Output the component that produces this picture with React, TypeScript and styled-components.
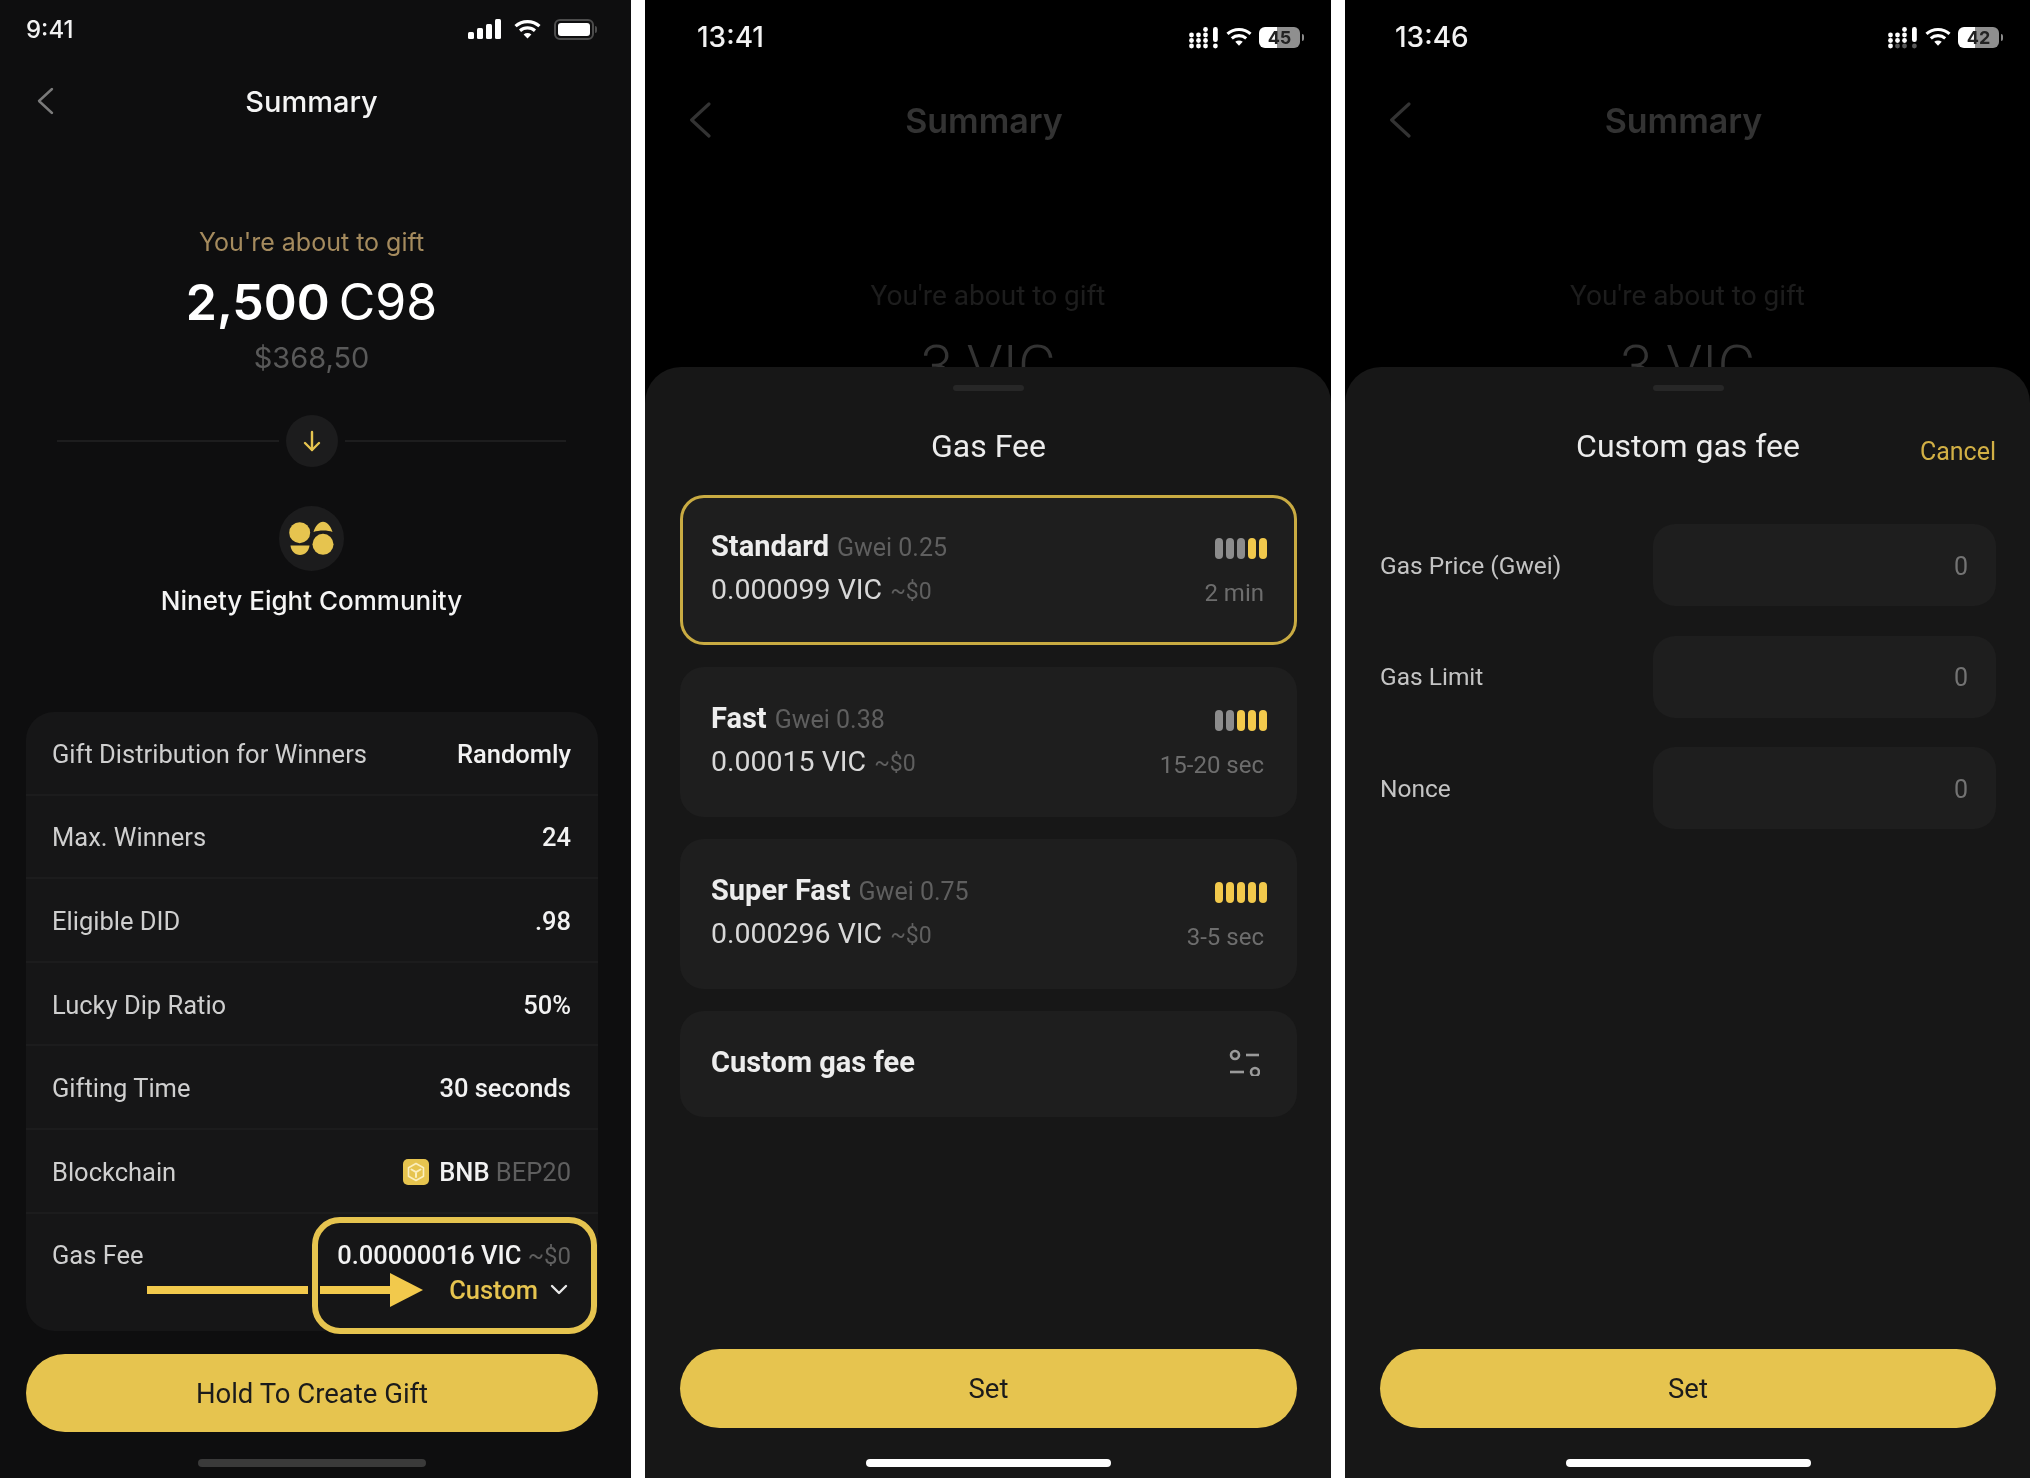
import React from 'react';
import styled, { createGlobalStyle } from 'styled-components';

const gold = '#e6c44f';
const bright = '#f2c94c';
const fontStack = `'Roboto', 'Liberation Sans', sans-serif`;

const GlobalStyle = createGlobalStyle`
  html, body {
    margin: 0;
    padding: 0;
    background: #ffffff;
  }
  * {
    box-sizing: border-box;
  }
`;

const Page = styled.div`
  display: flex;
  gap: 14px;
  width: 2030px;
  height: 1478px;
  overflow: hidden;
  background: #ffffff;
  font-family: ${fontStack};
`;

const Phone = styled.div<{ $width: number; $bg: string }>`
  position: relative;
  display: flex;
  flex-direction: column;
  flex: none;
  width: ${({ $width }) => $width}px;
  height: 1478px;
  overflow: hidden;
  background: ${({ $bg }) => $bg};
  filter: blur(0.45px);
`;

const StatusBar = styled.div<{ $height: number; $left: number; $right: number }>`
  display: flex;
  align-items: center;
  justify-content: space-between;
  flex: none;
  height: ${({ $height }) => $height}px;
  padding: 0 ${({ $right }) => $right}px 0 ${({ $left }) => $left}px;
`;

const Clock = styled.span<{ $size: number }>`
  font-family: 'Inter', sans-serif;
  font-size: ${({ $size }) => $size}px;
  font-weight: 500;
  color: #f2f2f2;
`;

const StatusIcons = styled.div<{ $gap: number }>`
  display: flex;
  align-items: center;
  gap: ${({ $gap }) => $gap}px;
`;

const BatteryShell = styled.div`
  position: relative;
  display: flex;
  align-items: center;
  justify-content: center;
  width: 41px;
  height: 21px;
  border-radius: 6px;
  font-family: 'Inter', sans-serif;
  font-size: 18px;
  font-weight: 700;
  color: #222222;

  &::after {
    content: '';
    position: absolute;
    right: -4px;
    top: 7px;
    width: 2px;
    height: 7px;
    border-radius: 0 2px 2px 0;
    background: #8a8a8a;
  }
`;

const BatteryFull = styled(BatteryShell)`
  width: 40px;
  border: 2px solid #4c4c4c;
  padding: 2px;

  &::after {
    right: -5px;
    top: 5px;
    background: #4c4c4c;
  }
`;

const BatteryFill = styled.div`
  width: 100%;
  height: 100%;
  border-radius: 3px;
  background: #ffffff;
`;

const NavBar = styled.div<{ $height: number; $size: number; $color: string; $shift: number }>`
  position: relative;
  display: flex;
  align-items: center;
  justify-content: center;
  flex: none;
  height: ${({ $height }) => $height}px;
  padding-right: ${({ $shift }) => $shift}px;
  font-family: 'Inter', sans-serif;
  font-size: ${({ $size }) => $size}px;
  font-weight: ${({ $size }) => ($size > 30 ? 600 : 500)};
  color: ${({ $color }) => $color};
`;

const BackButton = styled.div<{ $left: number }>`
  position: absolute;
  left: ${({ $left }) => $left}px;
  top: 50%;
  display: flex;
  transform: translateY(-50%);
`;

/* first screen */

const Hero = styled.div`
  display: flex;
  flex-direction: column;
  align-items: center;
  padding: 82px 8px 0 0;
`;

const HeroLabel = styled.div`
  font-family: 'Inter', sans-serif;
  font-size: 25px;
  line-height: 32px;
  color: #a58b5e;
`;

const HeroAmount = styled.div`
  display: flex;
  align-items: baseline;
  gap: 9px;
  margin-top: 11px;
  font-family: 'Inter', sans-serif;
  font-size: 50px;
  line-height: 66px;
  color: #ffffff;
`;

const AmountValue = styled.span`
  font-weight: 600;
`;

const AmountUnit = styled.span`
  font-weight: 400;
`;

const HeroUsd = styled.div`
  margin-top: 5px;
  font-family: 'Inter', sans-serif;
  font-size: 29px;
  line-height: 36px;
  color: #595959;
`;

const DividerRow = styled.div`
  display: flex;
  align-items: center;
  gap: 7px;
  width: 509px;
  margin-top: 39px;
`;

const DividerLine = styled.div`
  flex: 1;
  height: 2px;
  background: #1d1d1e;
`;

const ArrowCircle = styled.div`
  display: flex;
  align-items: center;
  justify-content: center;
  width: 52px;
  height: 52px;
  border-radius: 50%;
  background: #1c1c1d;
`;

const Avatar = styled.div`
  display: flex;
  width: 65px;
  height: 65px;
  margin-top: 39px;
  border-radius: 50%;
  background: #1c1c1d;
`;

const CommunityName = styled.div`
  margin-top: 13px;
  font-family: 'Inter', sans-serif;
  font-size: 26px;
  font-weight: 500;
  line-height: 34px;
  color: #f4f4f4;
`;

const SummaryCard = styled.div`
  position: relative;
  margin: 94px 33px 0 26px;
  height: 619px;
  border-radius: 28px;
  background: #161617;
`;

const SummaryRow = styled.div<{ $last?: boolean }>`
  display: flex;
  justify-content: space-between;
  align-items: ${({ $last }) => ($last ? 'flex-start' : 'center')};
  height: ${({ $last }) => ($last ? 117.4 : 83.6)}px;
  padding: ${({ $last }) => ($last ? '24px' : '2px')} 27px 0 26px;
  border-bottom: ${({ $last }) => ($last ? 'none' : '2px solid #1c1c1d')};
  font-size: 25.5px;
  line-height: 34px;
`;

const RowLabel = styled.span`
  color: #cfcfcf;
`;

const RowValue = styled.span`
  display: flex;
  align-items: center;
  gap: 10px;
  font-weight: 500;
  color: #f2f2f2;
`;

const Muted = styled.span<{ $size?: number }>`
  font-size: ${({ $size }) => $size || 25.5}px;
  font-weight: 400;
  color: #5f5f5f;
`;

const GasValue = styled.div`
  display: flex;
  flex-direction: column;
  align-items: flex-end;
  gap: 0;
  font-weight: 500;
  color: #f2f2f2;
`;

const CustomToggle = styled.span`
  display: flex;
  align-items: center;
  gap: 12px;
  padding-right: 3px;
  color: ${gold};
`;

const Annotation = styled.div`
  position: absolute;
  left: 286px;
  top: 505px;
  width: 285px;
  height: 117px;
  border: 6px solid ${gold};
  border-radius: 28px;
`;

const AnnotationArrow = styled.svg`
  position: absolute;
  left: 121px;
  top: 560px;
`;

const PrimaryButton = styled.div<{ $height: number }>`
  display: flex;
  align-items: center;
  justify-content: center;
  flex: none;
  height: ${({ $height }) => $height}px;
  border-radius: 40px;
  background: ${gold};
  font-size: 27.5px;
  font-weight: 400;
  color: #1b1b1b;
`;

const CreateButton = styled(PrimaryButton)`
  margin: 23px 33px 0 26px;
`;

const HomeBar = styled.div<{ $width: number; $color: string }>`
  flex: none;
  width: ${({ $width }) => $width}px;
  height: 8px;
  margin: 0 auto;
  border-radius: 4px;
  background: ${({ $color }) => $color};
`;

const FirstHomeBar = styled(HomeBar)`
  margin: 27px 0 0 198px;
`;

/* sheet screens */

const DimHero = styled.div`
  display: flex;
  flex-direction: column;
  align-items: center;
  padding-top: 112px;
`;

const DimLabel = styled.div`
  font-size: 28px;
  line-height: 36px;
  color: #1d1d1d;
`;

const DimAmount = styled.div`
  margin-top: 17px;
  font-size: 58px;
  font-weight: 300;
  line-height: 70px;
  color: #333333;
`;

const Sheet = styled.div`
  position: absolute;
  left: 0;
  right: 0;
  top: 367px;
  bottom: 0;
  display: flex;
  flex-direction: column;
  padding: 18px 34px 11px 35px;
  border-radius: 36px 36px 0 0;
  background: #171717;
`;

const SheetHandle = styled.div`
  flex: none;
  width: 71px;
  height: 6px;
  margin: 0 auto;
  border-radius: 3px;
  background: #272727;
`;

const SheetHeader = styled.div`
  position: relative;
  display: flex;
  align-items: center;
  justify-content: center;
  flex: none;
  height: 40px;
  margin-top: 35px;
  font-size: 32px;
  color: #ececec;
`;

const CancelLink = styled.span`
  position: absolute;
  right: 0;
  top: 11px;
  font-size: 25px;
  color: #d2b045;
`;

const CardList = styled.div`
  display: flex;
  flex-direction: column;
  gap: 22px;
  margin-top: 29px;
`;

const GasCard = styled.div<{ $selected?: boolean }>`
  display: flex;
  justify-content: space-between;
  height: 150px;
  padding: 34px 33px 0 31px;
  border-radius: 24px;
  background: #1e1e1e;
  box-shadow: ${({ $selected }) => ($selected ? 'inset 0 0 0 3px #c9ab42' : 'none')};
`;

const CustomCard = styled(GasCard)`
  align-items: center;
  height: 106px;
  padding: 0 37px 5px 31px;
`;

const GasLine = styled.div<{ $second?: boolean }>`
  display: flex;
  align-items: baseline;
  gap: 8px;
  margin-top: ${({ $second }) => ($second ? 8 : 0)}px;
  line-height: 34px;
`;

const GasName = styled.span`
  font-size: 29px;
  font-weight: 700;
  color: #ededed;
`;

const GasAmount = styled.span`
  font-size: 28.5px;
  color: #d8d8d8;
`;

const GasMeta = styled.div`
  display: flex;
  flex-direction: column;
  align-items: flex-end;
`;

const SpeedBars = styled.div`
  display: flex;
  gap: 3px;
  margin: 9px -3px 0 0;
`;

const SpeedBar = styled.div<{ $on: boolean }>`
  width: 8px;
  height: 21px;
  border-radius: 4px;
  background: ${({ $on }) => ($on ? bright : '#8c8c8c')};
`;

const GasTime = styled.div`
  margin-top: 17px;
  font-size: 24px;
  line-height: 34px;
  color: #6d6d6d;
`;

const SheetFooter = styled.div`
  display: flex;
  flex-direction: column;
  gap: 31px;
  margin-top: auto;
`;

const FieldList = styled.div`
  display: flex;
  flex-direction: column;
  gap: 29.5px;
  margin-top: 58px;
`;

const Field = styled.div`
  display: flex;
  align-items: center;
  justify-content: space-between;
`;

const FieldLabel = styled.span`
  font-size: 24.5px;
  color: #c4c4c4;
`;

const FieldInput = styled.div`
  display: flex;
  align-items: center;
  justify-content: flex-end;
  width: 343px;
  height: 82px;
  padding: 2px 28px 0 0;
  border-radius: 22px;
  background: #1e1e1e;
  font-size: 25px;
  color: #737373;
`;

const Chevron = ({ color, size = 1 }: { color: string; size?: number }) => (
  <svg width={17 * size} height={27 * size} viewBox="0 0 17 27" fill="none">
    <polyline points="15,1.5 2,13.5 15,25.5" stroke={color} strokeWidth="2.4" strokeLinecap="round" strokeLinejoin="round" />
  </svg>
);

const Wifi = ({ width }: { width: number }) => (
  <svg width={width} height={width * 0.74} viewBox="0 0 27 20" fill="none" stroke="#ffffff" strokeLinecap="butt">
    <path d="M1.5 7.2C8.3 1 18.7 1 25.5 7.2" strokeWidth="3.2" />
    <path d="M6 11.8C10.4 8 16.6 8 21 11.8" strokeWidth="3.2" />
    <path d="M13.5 19.5L9.6 15.4C11.9 13.6 15.1 13.6 17.4 15.4Z" fill="#ffffff" stroke="none" />
  </svg>
);

const SignalBars = () => (
  <svg width="33" height="20" viewBox="0 0 33 20" fill="#ffffff">
    <rect x="0" y="13" width="6" height="7" rx="1.5" />
    <rect x="9" y="9" width="6" height="11" rx="1.5" />
    <rect x="18" y="5" width="6" height="15" rx="1.5" />
    <rect x="27" y="0" width="6" height="20" rx="1.5" />
  </svg>
);

const SignalDots = ({ dim }: { dim?: boolean }) => {
  const columns = [
    { x: 2.5, rows: [9, 14.5, 20] },
    { x: 9.5, rows: [9, 14.5, 20] },
    { x: 16.5, rows: [3.5, 9, 14.5, 20] },
  ];
  return (
    <svg width="30" height="23" viewBox="0 0 30 23" fill="#ffffff">
      {columns.map((column, index) =>
        column.rows.map((y) => (
          <circle
            key={`${column.x}-${y}`}
            cx={column.x}
            cy={y}
            r="2.4"
            opacity={dim && y === 20 && index > 0 ? 0.35 : 1}
          />
        )),
      )}
      <rect x="24" y="1" width="4.8" height="15" rx="2.2" />
      <circle cx="26.4" cy="20" r="2.4" opacity={dim ? 0.35 : 1} />
    </svg>
  );
};

const ArrowDownIcon = () => (
  <svg width="18" height="22" viewBox="0 0 18 22" fill="none" stroke={gold} strokeWidth="2.4" strokeLinecap="round" strokeLinejoin="round">
    <path d="M9 2V20" />
    <path d="M2 13L9 20L16 13" />
  </svg>
);

const CommunityLogo = () => (
  <svg width="65" height="65" viewBox="0 0 65 65" fill={gold}>
    <circle cx="20.7" cy="26.7" r="10.5" />
    <path d="M11.5 39.5H30.5C30 45 26 49 21 49C16 49 12 45 11.5 39.5Z" />
    <path d="M34.5 26C36 20 40 15.7 44 15.7C48 15.7 52 20 53.5 26C49 24 40 24 34.5 26Z" />
    <circle cx="44" cy="38.3" r="10.5" />
  </svg>
);

const BnbIcon = () => (
  <svg width="26" height="26" viewBox="0 0 26 26">
    <rect width="26" height="26" rx="5" fill={gold} />
    <path d="M13 4.5L20.5 8.8V17.2L13 21.5L5.5 17.2V8.8Z" fill="none" stroke="#fbeebd" strokeWidth="1.6" strokeLinejoin="round" />
    <path d="M8.5 10.5L13 13.2L17.5 10.5M13 13.2V18" fill="none" stroke="#fbeebd" strokeWidth="2" strokeLinecap="round" />
  </svg>
);

const SlidersIcon = () => (
  <svg width="31" height="29" viewBox="0 0 31 29" fill="none" stroke="#9a9a9a" strokeWidth="2.6">
    <circle cx="6" cy="8" r="4" />
    <path d="M17 8H30" />
    <path d="M1 25H15" />
    <circle cx="26" cy="25" r="4" />
  </svg>
);

const Annotationarrow = () => (
  <AnnotationArrow width="277" height="36" viewBox="0 0 277 36" fill={bright}>
    <rect x="0" y="14" width="161" height="8" />
    <rect x="173" y="14" width="72" height="8" />
    <polygon points="243,1 276,18 243,35" />
  </AnnotationArrow>
);

const summaryRows = [
  ['Gift Distribution for Winners', 'Randomly'],
  ['Max. Winners', '24'],
  ['Eligible DID', '.98'],
  ['Lucky Dip Ratio', '50%'],
  ['Gifting Time', '30 seconds'],
];

const gasOptions = [
  { name: 'Standard', gwei: 'Gwei 0.25', amount: '0.000099 VIC', time: '2 min', level: 2, selected: true },
  { name: 'Fast', gwei: 'Gwei 0.38', amount: '0.00015 VIC', time: '15-20 sec', level: 3, selected: false },
  { name: 'Super Fast', gwei: 'Gwei 0.75', amount: '0.000296 VIC', time: '3-5 sec', level: 5, selected: false },
];

const SheetBackdrop = ({ time, level, dim, left, right }: { time: string; level: number; dim?: boolean; left: number; right: number }) => (
  <>
    <StatusBar $height={74} $left={left} $right={right}>
      <Clock $size={28}>{time}</Clock>
      <StatusIcons $gap={7}>
        <SignalDots dim={dim} />
        <Wifi width={26} />
        <BatteryShell
          style={{ background: `linear-gradient(90deg, #fff ${level}%, #8f8f8f ${level}%)` }}
        >
          {level}
        </BatteryShell>
      </StatusIcons>
    </StatusBar>
    <NavBar $height={92} $size={34} $color="#333333" $shift={8}>
      <BackButton $left={44}>
        <Chevron color="#333333" size={1.33} />
      </BackButton>
      {'Summary'}
    </NavBar>
    <DimHero>
      <DimLabel>You're about to gift</DimLabel>
      <DimAmount>3 VIC</DimAmount>
    </DimHero>
  </>
);

const App = () => (
  <>
    <GlobalStyle />
    <Page>
      <Phone $width={631} $bg="#0e0e0f">
        <StatusBar $height={58} $left={26} $right={37}>
          <Clock $size={24}>9:41</Clock>
          <StatusIcons $gap={13}>
            <SignalBars />
            <Wifi width={27} />
            <BatteryFull>
              <BatteryFill />
            </BatteryFull>
          </StatusIcons>
        </StatusBar>
        <NavBar $height={86} $size={29} $color="#f4f4f4" $shift={8}>
          <BackButton $left={37}>
            <Chevron color="#7a7a7a" />
          </BackButton>
          {'Summary'}
        </NavBar>
        <Hero>
          <HeroLabel>You're about to gift</HeroLabel>
          <HeroAmount>
            <AmountValue>2,500</AmountValue>
            <AmountUnit>C98</AmountUnit>
          </HeroAmount>
          <HeroUsd>$368,50</HeroUsd>
          <DividerRow>
            <DividerLine />
            <ArrowCircle>
              <ArrowDownIcon />
            </ArrowCircle>
            <DividerLine />
          </DividerRow>
          <Avatar>
            <CommunityLogo />
          </Avatar>
          <CommunityName>Ninety Eight Community</CommunityName>
        </Hero>
        <SummaryCard>
          {summaryRows.map(([label, value]) => (
            <SummaryRow key={label}>
              <RowLabel>{label}</RowLabel>
              <RowValue>{value}</RowValue>
            </SummaryRow>
          ))}
          <SummaryRow>
            <RowLabel>Blockchain</RowLabel>
            <RowValue>
              <BnbIcon />
              <span>
                BNB <Muted>BEP20</Muted>
              </span>
            </RowValue>
          </SummaryRow>
          <SummaryRow $last>
            <RowLabel>Gas Fee</RowLabel>
            <GasValue>
              <span>
                0.00000016 VIC <Muted $size={24}>~$0</Muted>
              </span>
              <CustomToggle>
                Custom
                <svg width="18" height="11" viewBox="0 0 18 11" fill="none" stroke="#e8e8e8" strokeWidth="2.4" strokeLinecap="round" strokeLinejoin="round">
                  <polyline points="2,2 9,9 16,2" />
                </svg>
              </CustomToggle>
            </GasValue>
          </SummaryRow>
          <Annotation />
          <Annotationarrow />
        </SummaryCard>
        <CreateButton $height={78}>Hold To Create Gift</CreateButton>
        <FirstHomeBar $width={228} $color="#3a3a3a" />
      </Phone>

      <Phone $width={686} $bg="#000000">
        <SheetBackdrop time="13:41" level={45} left={52} right={31} />
        <Sheet>
          <SheetHandle />
          <SheetHeader>Gas Fee</SheetHeader>
          <CardList>
            {gasOptions.map((option) => (
              <GasCard key={option.name} $selected={option.selected}>
                <div>
                  <GasLine>
                    <GasName>{option.name}</GasName>
                    <Muted $size={25}>{option.gwei}</Muted>
                  </GasLine>
                  <GasLine $second>
                    <GasAmount>{option.amount}</GasAmount>
                    <Muted $size={23}>~$0</Muted>
                  </GasLine>
                </div>
                <GasMeta>
                  <SpeedBars>
                    {[0, 1, 2, 3, 4].map((index) => (
                      <SpeedBar key={index} $on={index >= 5 - option.level} />
                    ))}
                  </SpeedBars>
                  <GasTime>{option.time}</GasTime>
                </GasMeta>
              </GasCard>
            ))}
            <CustomCard>
              <GasName>Custom gas fee</GasName>
              <SlidersIcon />
            </CustomCard>
          </CardList>
          <SheetFooter>
            <PrimaryButton $height={79}>Set</PrimaryButton>
            <HomeBar $width={245} $color="#ffffff" />
          </SheetFooter>
        </Sheet>
      </Phone>

      <Phone $width={685} $bg="#000000">
        <SheetBackdrop time="13:46" level={42} dim left={50} right={31} />
        <Sheet>
          <SheetHandle />
          <SheetHeader>
            Custom gas fee
            <CancelLink>Cancel</CancelLink>
          </SheetHeader>
          <FieldList>
            {['Gas Price (Gwei)', 'Gas Limit', 'Nonce'].map((label) => (
              <Field key={label}>
                <FieldLabel>{label}</FieldLabel>
                <FieldInput>0</FieldInput>
              </Field>
            ))}
          </FieldList>
          <SheetFooter>
            <PrimaryButton $height={79}>Set</PrimaryButton>
            <HomeBar $width={245} $color="#ffffff" />
          </SheetFooter>
        </Sheet>
      </Phone>
    </Page>
  </>
);

export default App;
